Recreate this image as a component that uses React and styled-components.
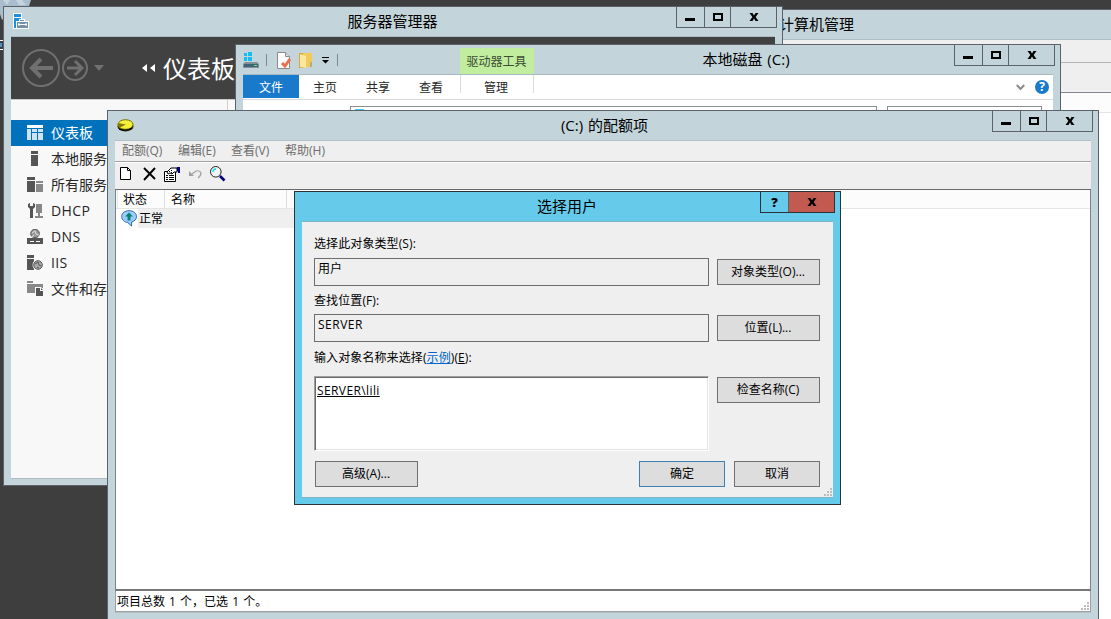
import styled, { createGlobalStyle, css } from "styled-components";

const App = () => {
  return (
    <>
      <GlobalStyle />
      <Desktop>
        <Wallpaper />
        <ManagementWindow />
        <ServerWindow />
        <ExplorerWindow />
        <QuotaWindow />
        <SelectUserDialog />
      </Desktop>
    </>
  );
};
export default App;

const Wallpaper = () => (
  <WallpaperArt width="34" height="60" viewBox="0 0 34 60">
    <path d="M0 0h31l-2 6H4v12l-2 2-2-6z" fill="#a9bdcc" />
    <path d="M3 0h7l-3 5zM16 0h6l4 5h-7z" fill="#c6d4de" />
    <path d="M0 40.500h3M0 49.500h3" stroke="#fff" />
    <path d="M0 43h2v4H0z" fill="#4d8fc4" />
  </WallpaperArt>
);

const MinGlyph = () => (
  <svg width="10" height="8" shapeRendering="crispEdges">
    <path d="M0 5h10v3H0z" />
  </svg>
);
const MaxGlyph = () => (
  <svg width="10" height="8" shapeRendering="crispEdges">
    <path d="M0 0h10v8H0zM2 2v4h6V2z" fillRule="evenodd" />
  </svg>
);
const CloseGlyph = () => (
  <svg width="10" height="8" viewBox="0 0 10 8">
    <path d="M.5 0h3L5 2.4 6.500 0h3L6.600 4l2.900 4h-3L5 5.600 3.500 8h-3L3.400 4z" />
  </svg>
);

const WindowControls = () => (
  <Controls>
    <Control $width={27}>
      <MinGlyph />
    </Control>
    <Control $width={25}>
      <MaxGlyph />
    </Control>
    <Control $width={45}>
      <CloseGlyph />
    </Control>
  </Controls>
);

const ManagementWindow = () => (
  <ManagementFrame>
    <ManagementTitle>计算机管理</ManagementTitle>
    <ManagementMenu />
    <ManagementTools />
    <ManagementHeader />
  </ManagementFrame>
);

const NAV_ITEMS = [
  { label: "仪表板", icon: "dashboard" },
  { label: "本地服务", icon: "local" },
  { label: "所有服务", icon: "all" },
  { label: "DHCP", icon: "dhcp", latin: true },
  { label: "DNS", icon: "dns", latin: true },
  { label: "IIS", icon: "iis", latin: true },
  { label: "文件和存", icon: "files" },
];

const NAV_ICONS = {
  dashboard: (
    <g fill="#cfe3f3">
      <path d="M0 0h16v3H0z" fill="#fff" />
      <path d="M0 4h4v11H0zM5 4h5v3H5zM11 4h5v3h-5zM5 8h5v7H5zM11 8h5v7h-5z" />
    </g>
  ),
  local: <path d="M4 0h7v3H4zM4 4h7v11H4z" fill="#555" />,
  all: (
    <g fill="#555">
      <path d="M0 0h8v3H0zM0 4h8v11H0z" />
      <path d="M9 4h7v2H9zM9 7h7v8H9z" fill="#888" />
    </g>
  ),
  dhcp: (
    <g fill="#555">
      <path d="M1 1v3l2 2v9h3V6l2-2V1L6 0v3H3V0z" />
      <path d="M9 1h6v9H9zM11 10h2v3h-2zM8 13h8v2H8z" fill="#888" />
    </g>
  ),
  dns: (
    <g>
      <circle cx="8" cy="4.500" r="4.300" fill="#999" stroke="#555" />
      <path d="M5 4l3-2 1 3 3 1M7 6l-2 2" stroke="#ddd" fill="none" />
      <path d="M0 9h16v6H0z" fill="#555" />
      <path d="M3 12.500h4M9 12.500h4" stroke="#fff" />
    </g>
  ),
  iis: (
    <g>
      <path d="M0 0h7v3H0zM0 4h7v11H0z" fill="#555" />
      <circle cx="11" cy="10" r="5.500" fill="#f8f8f8" />
      <circle cx="11" cy="10" r="4.300" fill="#aaa" stroke="#555" />
      <path d="M8 9l3-2 1 3 2 1M10 12l2 1" stroke="#555" fill="none" />
    </g>
  ),
  files: (
    <g>
      <path d="M0 0h6v2H0zM0 3h8v9H0zM7 3h9v4H7z" fill="#888" />
      <path d="M8 6h6l3 3v7H8z" fill="#f8f8f8" />
      <path d="M9 7h4v3h3v5H9zM14 7l2 2h-2z" fill="#555" />
    </g>
  ),
};

const ServerWindow = () => (
  <ServerFrame>
    <TitleBar>
      <TitleIcon>
        <svg width="17" height="17" viewBox="0 0 17 17">
          <path d="M0 0h9v16H0z" fill="#fff" />
          <path d="M1 1h7v3H1zM1 5h7v10H1z" fill="#1e8fdd" />
          <path d="M3 8h3V6h6v2h4v8H3z" fill="#fff" />
          <path d="M4 9h11v6H4zM7 7h4v1H7z" fill="#7290a5" />
          <path d="M5 11.500h9M6 10v3M13 10v3" stroke="#fff" />
        </svg>
      </TitleIcon>
      <Title>服务器管理器</Title>
      <WindowControls />
    </TitleBar>
    <ServerBody>
      <ServerHeader>
        <svg width="84" height="40" viewBox="0 0 84 40" fill="none" stroke="#707070">
          <circle cx="19" cy="20" r="18" strokeWidth="2" />
          <path d="M31 20H10M19 11l-9 9 9 9" strokeWidth="4" />
          <circle cx="53" cy="20" r="12" strokeWidth="2" />
          <path d="M45 20h14M53 13l7 7-7 7" strokeWidth="3" />
          <path d="M72 17h10l-5 6z" fill="#707070" stroke="none" />
        </svg>
        <Chevrons width="13" height="8" viewBox="0 0 13 8">
          <path d="M5 0v8L0 4zM13 0v8L8 4z" fill="#fff" />
        </Chevrons>
        <PageName>仪表板</PageName>
      </ServerHeader>
      <ServerContent>
        <Sidebar>
          {NAV_ITEMS.map((item, index) => (
            <NavItem key={item.icon} $active={index === 0} $latin={item.latin}>
              <svg width="17" height="16">
                {NAV_ICONS[item.icon]}
              </svg>
              {item.label}
            </NavItem>
          ))}
        </Sidebar>
      </ServerContent>
    </ServerBody>
  </ServerFrame>
);

const ExplorerWindow = () => (
  <ExplorerFrame>
    <ExplorerTitleBar>
      <QuickAccess>
        <svg width="16" height="17" viewBox="0 0 16 17">
          <path d="M1 1h3v3H1zM5 0h4v4H5zM1 5h3v4H1zM5 5h4v4H5z" fill="#13bdf5" />
          <path d="M2 10h12l2 2v4H0v-4z" fill="#85919a" />
          <path d="M1 12h14v3H1z" fill="#3c6474" />
          <path d="M11 13h3v1h-3z" fill="#6df06d" />
        </svg>
        <Separator />
        <svg width="16" height="17" viewBox="0 0 16 17">
          <path d="M1.500.5h8l4 4v12h-12z" fill="#fdfdfd" stroke="#8b8b8b" />
          <path d="M9.500.5v4h4" fill="#ddd" stroke="#8b8b8b" />
          <path d="M6 11l3 3 5-7" stroke="#e8704a" strokeWidth="3" fill="none" />
        </svg>
        <svg width="15" height="17" viewBox="0 0 15 17">
          <path d="M0 1h7v15H0z" fill="#d9a936" />
          <path d="M4 1h9v14H4z" fill="#f1c95c" />
          <path d="M1 2l6 2v12l-6-1z" fill="#fbe7a0" />
          <path d="M11 10h2v5h-2z" fill="#b5ad86" />
        </svg>
        <svg width="8" height="7" viewBox="0 0 8 7">
          <path d="M0 0h7v1H0zM0 3h7L3.500 6.500z" />
        </svg>
        <Separator />
      </QuickAccess>
      <ContextTab>驱动器工具</ContextTab>
      <Title>本地磁盘 (C:)</Title>
      <WindowControls />
    </ExplorerTitleBar>
    <ExplorerBody>
      <Ribbon>
        <FileTab>文件</FileTab>
        <RibbonTab>主页</RibbonTab>
        <RibbonTab>共享</RibbonTab>
        <RibbonTab>查看</RibbonTab>
        <ManageTab>管理</ManageTab>
        <RibbonTools>
          <svg width="9" height="7" viewBox="0 0 9 7">
            <path d="M.8 1l3.700 4L8.200 1" fill="none" stroke="#8c8c8c" strokeWidth="2" />
          </svg>
          <HelpBadge>?</HelpBadge>
        </RibbonTools>
      </Ribbon>
      <AddressRow>
        <svg width="42" height="4" viewBox="0 0 42 4">
          <path d="M1 4q4-4 9 0z" fill="#888" />
          <path d="M31 4q4-4 9 0z" fill="#ddd" />
        </svg>
        <AddressBox>
          <AddressIcon />
        </AddressBox>
        <SearchBox />
      </AddressRow>
    </ExplorerBody>
  </ExplorerFrame>
);

const QuotaWindow = () => (
  <QuotaFrame>
    <TitleBar>
      <TitleIcon>
        <svg width="17" height="13" viewBox="0 0 17 13">
          <ellipse cx="8.500" cy="7.500" rx="8" ry="5" fill="#2e2b00" />
          <ellipse cx="8.500" cy="5.500" rx="7.500" ry="4.800" fill="#f5f03c" stroke="#777200" />
          <path d="M9 5.500L1 4q-1 3 2 4.500z" fill="#847c00" />
          <path d="M2 10q6 3 13-1" stroke="#000" fill="none" />
        </svg>
      </TitleIcon>
      <QuotaTitle>(C:) 的配额项</QuotaTitle>
      <WindowControls />
    </TitleBar>
    <QuotaBody>
      <MenuBar>
        <MenuItem $width={56}>配额(Q)</MenuItem>
        <MenuItem $width={53}>编辑(E)</MenuItem>
        <MenuItem $width={54}>查看(V)</MenuItem>
        <MenuItem $width={54}>帮助(H)</MenuItem>
      </MenuBar>
      <ToolBar>
        <svg width="12" height="14" viewBox="0 0 12 14">
          <path d="M.5.5h7l3 3v9H.5z" fill="#fff" stroke="#000" />
          <path d="M7.500.5v3h3" fill="none" stroke="#000" />
        </svg>
        <svg width="14" height="14" viewBox="0 0 14 14">
          <path d="M1 1l11 11M12 1L1 13" stroke="#000" strokeWidth="1.900" />
        </svg>
        <svg width="17" height="15" viewBox="0 0 17 15">
          <path d="M.5 4.500h11v10H.5z" fill="#fff" stroke="#000" />
          <path d="M2 8.500h2M5 8.500h5M2 10.500h2M5 10.500h5M2 12.500h2M5 12.500h5" stroke="#000" />
          <path d="M3 5l4-4h6v4h-3l-2 2-2-1-2 1z" fill="#fff" stroke="#000" />
          <path d="M5 5l1-1M7 4l1-1M7 6l1-1" stroke="#000" />
          <path d="M13 0h3v6h-2V4h-1z" fill="#00007b" />
        </svg>
        <svg width="13" height="10" viewBox="0 0 13 10">
          <path d="M3 5l4-3q4-1 5 2 0 3-3 5" fill="none" stroke="#a0a0a0" strokeWidth="1.200" />
          <path d="M0 2v5h5z" fill="#a0a0a0" />
        </svg>
        <svg width="16" height="16" viewBox="0 0 16 16">
          <path d="M10 10l4.500 4.500" stroke="#00007b" strokeWidth="2.600" />
          <circle cx="5.800" cy="5.800" r="5.300" fill="#f2f6f6" stroke="#222" />
          <path d="M3 6q0-3 3-3" stroke="#00e0e0" strokeWidth="1.300" fill="none" />
        </svg>
      </ToolBar>
      <List>
        <ListHeader>
          <HeaderCell $width={48}>状态</HeaderCell>
          <HeaderCell $width={122}>名称</HeaderCell>
        </ListHeader>
        <ListRow>
          <svg width="17" height="17" viewBox="0 0 17 17">
            <path
              d="M8 .7C3.500.7.700 3.300.700 6.600c0 3.200 2.800 5.700 6 5.900l3.800 3.500.2-4c3-.8 4.800-2.800 4.800-5.400C15.500 3.300 12.500.7 8 .7z"
              fill="#9accff"
              stroke="#2d6aa8"
            />
            <path d="M8 2.500l4 4H9.500v4h-3v-4H4z" fill="#0c8071" />
          </svg>
          <RowText>正常</RowText>
        </ListRow>
      </List>
      <StatusBar>
        项目总数 1 个，已选 1 个。
        <SizeGrip />
      </StatusBar>
    </QuotaBody>
  </QuotaFrame>
);

const SizeGrip = () => (
  <Grip width="9" height="9" shapeRendering="crispEdges">
    <path
      d="M6 0h2v2H6zM3 3h2v2H3zM6 3h2v2H6zM0 6h2v2H0zM3 6h2v2H3zM6 6h2v2H6z"
      fill="#bcbcbc"
    />
  </Grip>
);

const SelectUserDialog = () => (
  <DialogFrame>
    <TitleBar>
      <span />
      <Title>选择用户</Title>
      <Controls $dialog>
        <Control $width={27}>?</Control>
        <Control $width={45} $danger>
          <CloseGlyph />
        </Control>
      </Controls>
    </TitleBar>
    <DialogBody>
      <Label $height={28} $top={6}>
        选择此对象类型(S):
      </Label>
      <FieldRow>
        <ReadOnlyField>用户</ReadOnlyField>
        <PushButton>对象类型(O)...</PushButton>
      </FieldRow>
      <Label $height={28} $top={7}>
        查找位置(F):
      </Label>
      <FieldRow>
        <ReadOnlyField>
          <Spaced>SERVER</Spaced>
        </ReadOnlyField>
        <PushButton>位置(L)...</PushButton>
      </FieldRow>
      <Label $height={34} $top={8}>
        输入对象名称来选择(<a>示例</a>)(<u>E</u>):
      </Label>
      <FieldRow>
        <NameInput>
          <u>SERVER\lili</u>
        </NameInput>
        <PushButton>检查名称(C)</PushButton>
      </FieldRow>
      <ButtonRow>
        <PushButton>高级(A)...</PushButton>
        <Answers>
          <PushButton $width={86} $default>
            确定
          </PushButton>
          <PushButton $width={86}>取消</PushButton>
        </Answers>
      </ButtonRow>
      <SizeGrip />
    </DialogBody>
  </DialogFrame>
);

const GlobalStyle = createGlobalStyle`
  * {
    box-sizing: border-box;
  }
  body {
    margin: 0;
    overflow: hidden;
    font-family: "Open Sans", "Noto Sans CJK SC", sans-serif;
    font-size: 12px;
    line-height: 16px;
    color: #000;
  }
  svg {
    display: block;
    flex-shrink: 0;
  }
`;

const Desktop = styled.div`
  position: relative;
  width: 1111px;
  height: 619px;
  overflow: hidden;
  background-color: #3e3e3e;
`;
const WallpaperArt = styled.svg`
  position: absolute;
  left: 0;
  top: 0;
`;

const Frame = styled.div`
  position: absolute;
  display: flex;
  flex-direction: column;
  border: 1px solid #5c6269;
  background-color: #c3d5db;
`;
const TitleBar = styled.div`
  display: grid;
  grid-template-columns: 1fr auto 1fr;
  height: 29px;
  flex-shrink: 0;
  padding-right: 5px;
`;
const Title = styled.div`
  align-self: center;
  padding: 0 0 2px 4px;
  text-align: center;
  font-size: 15px;
  line-height: 20px;
  white-space: pre;
  word-spacing: 1px;
`;
const QuotaTitle = styled(Title)`
  padding-left: 8px;
`;
const TitleIcon = styled.div`
  display: flex;
  align-items: center;
  padding-left: 9px;
`;
const Controls = styled.div`
  display: flex;
  justify-self: end;
  height: 21px;
  border: solid ${({ $dialog }) => ($dialog ? "#2b3238" : "#5c6269")};
  border-width: 0 1px 1px;
`;
const Control = styled.div`
  box-sizing: content-box;
  display: flex;
  align-items: center;
  justify-content: center;
  width: ${({ $width }) => $width}px;
  font-size: 13px;
  font-weight: 800;
  &:not(:first-child) {
    border-left: 1px solid #5c6269;
  }
  &:first-child svg {
    margin-right: 1px;
  }
  ${({ $danger }) =>
    $danger &&
    css`
      background-color: #c25a50;
    `}
`;

const ManagementFrame = styled(Frame)`
  left: 640px;
  top: 9px;
  width: 480px;
  height: 640px;
  background-color: #fff;
`;
const ManagementTitle = styled.div`
  height: 30px;
  padding: 4px 0 0 138px;
  border-bottom: 1px solid #aebfc6;
  background-color: #c3d5db;
  font-size: 15px;
  line-height: 20px;
`;
const ManagementMenu = styled.div`
  height: 23px;
  border-bottom: 1px solid #b4b4b4;
  background-color: #efefef;
`;
const ManagementTools = styled.div`
  height: 30px;
  border-bottom: 1px solid #828790;
  background-color: #efefef;
`;
const ManagementHeader = styled.div`
  height: 20px;
  border-bottom: 1px solid #e3e3e3;
  background-color: #fcfcfd;
`;

const ServerFrame = styled(Frame)`
  left: 3px;
  top: 6px;
  width: 780px;
  height: 480px;
`;
const ServerBody = styled.div`
  display: flex;
  flex-direction: column;
  height: 443px;
  margin: 0 7px;
  border-top: 1px solid #adbcc2;
  border-bottom: 1px solid #adbcc2;
`;
const ServerHeader = styled.div`
  display: flex;
  align-items: center;
  height: 62px;
  padding-left: 11px;
  background-color: #414141;
`;
const Chevrons = styled.svg`
  margin: 0 8px 0 36px;
`;
const PageName = styled.div`
  padding-top: 2px;
  color: #fff;
  font-size: 24px;
  line-height: 30px;
`;
const ServerContent = styled.div`
  flex: 1;
  border-top: 1px solid #c9c9c9;
  background-color: #fafafa;
`;
const Sidebar = styled.div`
  width: 217px;
  height: 100%;
  padding-top: 20px;
  border-right: 1px solid #cfcfcf;
  background-color: #f8f8f8;
`;
const NavItem = styled.div`
  display: flex;
  align-items: center;
  gap: 7px;
  height: 26px;
  padding-left: 16px;
  font-size: 14px;
  letter-spacing: ${({ $latin }) => ($latin ? "0.4px" : "normal")};
  color: ${({ $active }) => ($active ? "#fff" : "#262626")};
  background-color: ${({ $active }) => ($active ? "#0072bc" : "transparent")};
`;

const ExplorerFrame = styled(Frame)`
  left: 235px;
  top: 44px;
  width: 826px;
  height: 100px;
`;
const ExplorerTitleBar = styled(TitleBar)`
  grid-template-columns: 224px 74px 1fr auto;
`;
const QuickAccess = styled.div`
  display: flex;
  align-items: center;
  padding-left: 7px;
  svg:nth-of-type(2) {
    margin-right: 7px;
  }
  svg:nth-of-type(3) {
    margin-right: 8px;
  }
`;
const Separator = styled.span`
  width: 1px;
  height: 12px;
  margin: 0 9px 0 7px;
  background-color: #7d898f;
  svg + & {
    margin-top: -1px;
  }
`;
const ContextTab = styled.div`
  height: 27px;
  margin-top: 3px;
  padding: 6px 1px 0 0;
  background-color: #c1ed9f;
  color: #3c4d33;
  text-align: center;
`;
const ExplorerBody = styled.div`
  flex: 1;
  margin: 0 7px;
  border-top: 1px solid #a9b9c0;
  background-color: #fff;
`;
const Ribbon = styled.div`
  display: flex;
  height: 25px;
  border-bottom: 1px solid #d9dadb;
`;
const RibbonTab = styled.div`
  width: 53px;
  height: 23px;
  padding-right: 1px;
  line-height: 25px;
  text-align: center;
  color: #262626;
`;
const FileTab = styled(RibbonTab)`
  width: 56px;
  padding-right: 0;
  color: #fff;
  background-color: #1979ca;
`;
const ManageTab = styled(RibbonTab)`
  width: 74px;
  height: 18px;
  margin-left: 2px;
  padding-right: 2px;
  border: solid #dadbdc;
  border-width: 0 1px;
`;
const RibbonTools = styled.div`
  display: flex;
  align-items: center;
  gap: 10px;
  margin-left: auto;
  padding-right: 4px;
`;
const HelpBadge = styled.div`
  width: 14px;
  height: 14px;
  border-radius: 50%;
  background-color: #1979ca;
  color: #fff;
  font-size: 12px;
  font-weight: 700;
  line-height: 14px;
  text-align: center;
`;
const AddressRow = styled.div`
  display: flex;
  align-items: flex-start;
  padding: 6px 11px 0 14px;
  svg {
    margin-top: 2px;
  }
`;
const AddressBox = styled.div`
  width: 527px;
  height: 24px;
  margin: 0 10px 0 51px;
  padding: 2px 4px;
  border: 1px solid #8d8d8d;
`;
const AddressIcon = styled.div`
  width: 9px;
  height: 8px;
  background-color: #3ccaf5;
`;
const SearchBox = styled.div`
  flex: 1;
  height: 24px;
  border: 1px solid #8d8d8d;
`;

const QuotaFrame = styled(Frame)`
  left: 107px;
  top: 110px;
  width: 992px;
  height: 520px;
`;
const QuotaBody = styled.div`
  display: flex;
  flex-direction: column;
  height: 473px;
  margin: 0 7px;
  border-top: 1px solid #b3bfc4;
  border-bottom: 1px solid #b3bfc4;
  background-color: #efefef;
`;
const MenuBar = styled.div`
  display: flex;
  align-items: center;
  height: 21px;
  padding-left: 7px;
  border-bottom: 1px solid #a0a0a0;
  color: #6d6d6d;
`;
const MenuItem = styled.div`
  width: ${({ $width }) => $width}px;
`;
const ToolBar = styled.div`
  display: flex;
  align-items: center;
  gap: 8px;
  height: 28px;
  padding: 0 0 4px 5px;
  border-top: 1px solid #fff;
  border-bottom: 1px solid #696969;
  svg:nth-child(1) {
    margin-right: 3px;
  }
  svg:nth-child(2) {
    margin-right: -1px;
  }
`;
const List = styled.div`
  height: 401px;
  border: 1px solid #7e8388;
  border-top: 0;
  border-bottom: 2px solid #777;
  background-color: #fff;
`;
const ListHeader = styled.div`
  display: flex;
  height: 19px;
  padding-left: 1px;
  border-bottom: 1px solid #e5e5e5;
  background-color: #fcfcfc;
`;
const HeaderCell = styled.div`
  width: ${({ $width }) => $width}px;
  padding-left: 6px;
  line-height: 19px;
  border-right: 1px solid #dedede;
  &:first-child {
    padding-left: 5px;
    border-left: 1px solid #e5e5e5;
  }
`;
const ListRow = styled.div`
  display: flex;
  align-items: center;
  height: 19px;
  padding-left: 5px;
`;
const RowText = styled.div`
  width: 300px;
  height: 19px;
  padding-left: 1px;
  line-height: 19px;
  background-color: #efefef;
`;
const StatusBar = styled.div`
  position: relative;
  height: 21px;
  padding-left: 1px;
  border: 1px solid #a0a0a0;
  border-top: 0;
  line-height: 21px;
  white-space: pre;
  word-spacing: 1px;
  background-color: #fff;
`;
const Grip = styled.svg`
  position: absolute;
  right: 0;
  bottom: 0;
`;

const DialogFrame = styled(Frame)`
  left: 294px;
  top: 191px;
  width: 547px;
  height: 314px;
  border-color: #2b3238;
  background-color: #66cbea;
`;
const DialogBody = styled.div`
  position: relative;
  height: 277px;
  margin: 0 7px;
  padding: 8px 13px 0 12px;
  border-top: 1px solid #7fb4c6;
  border-bottom: 1px solid #7fb4c6;
  background-color: #efefef;
`;
const Label = styled.div`
  height: ${({ $height }) => $height}px;
  padding-top: ${({ $top }) => $top}px;
  white-space: pre;
  letter-spacing: 0.1px;
  a {
    color: #0066cc;
    text-decoration: underline;
  }
`;
const FieldRow = styled.div`
  display: flex;
  justify-content: space-between;
  align-items: flex-start;
`;
const ReadOnlyField = styled.div`
  width: 395px;
  height: 28px;
  padding: 2px 3px;
  border: 1px solid #6d6d6d;
`;
const Spaced = styled.span`
  letter-spacing: 0.5px;
`;
const NameInput = styled.div`
  width: 395px;
  height: 75px;
  padding: 6px 1px;
  border: 1px solid;
  border-color: #a0a0a0 #fff #fff #a0a0a0;
  box-shadow:
    inset 1px 1px #696969,
    inset -1px -1px #e3e3e3;
  background-color: #fff;
  letter-spacing: 0.4px;
  u {
    margin-left: 1px;
  }
`;
const PushButton = styled.div`
  display: flex;
  align-items: center;
  justify-content: center;
  width: ${({ $width }) => $width || 103}px;
  height: 26px;
  margin-top: 1px;
  padding-right: ${({ $width }) => ($width ? 0 : 1)}px;
  border: 1px solid ${({ $default }) => ($default ? "#3c7fb1" : "#707070")};
  background-color: #dddddd;
`;
const ButtonRow = styled.div`
  display: flex;
  justify-content: space-between;
  padding: 9px 0 0 1px;
`;
const Answers = styled.div`
  display: flex;
  gap: 9px;
`;
